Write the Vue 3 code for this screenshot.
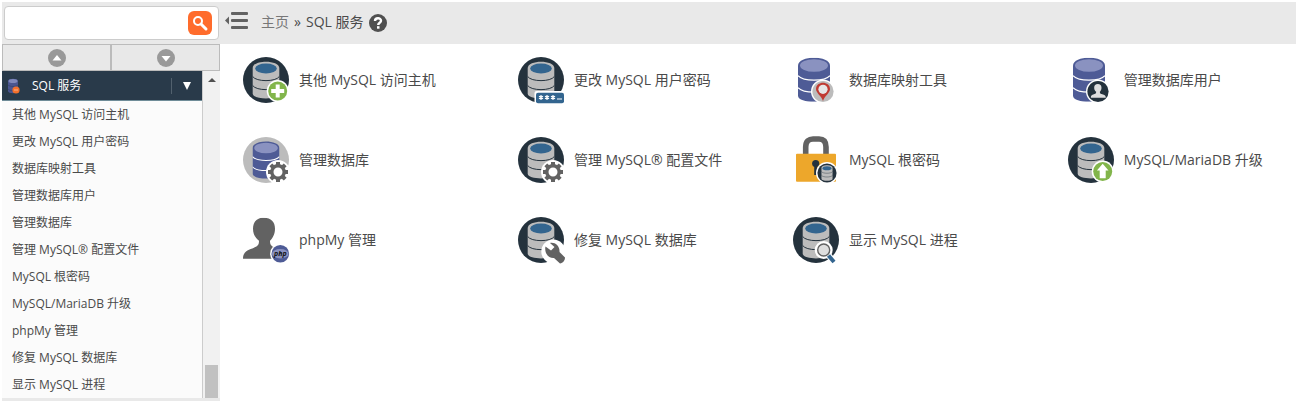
<script setup>
import { ref, computed } from 'vue'

const search = ref('')
const open = ref(true)

const items = [
    {icon: 'host', text: '其他 MySQL 访问主机'},
    {icon: 'password', text: '更改 MySQL 用户密码'},
    {icon: 'map', text: '数据库映射工具'},
    {icon: 'dbuser', text: '管理数据库用户'},
    {icon: 'manage', text: '管理数据库'},
    {icon: 'config', text: '管理 MySQL® 配置文件'},
    {icon: 'root', text: 'MySQL 根密码'},
    {icon: 'upgrade', text: 'MySQL/MariaDB 升级'},
    {icon: 'phpmy', text: 'phpMy 管理'},
    {icon: 'repair', text: '修复 MySQL 数据库'},
    {icon: 'process', text: '显示 MySQL 进程'},
]

// icons that show the grey cylinder on a dark disc
const darkIcons = ['host', 'password', 'config', 'upgrade', 'repair', 'process']

const menu = computed(() => items.filter(({text}) => text.toLowerCase().includes(search.value.toLowerCase())))
</script>

<template>
    <div class="page">
        <svg class="defs" aria-hidden="true">
            <symbol id="db-dark" viewBox="0 0 48 48">
                <circle cx="24" cy="24" r="23" fill="#24323d"/>
                <path d="M10.7 12C10.7 3.5 37.3 3.5 37.3 12V37.5C37.3 44 10.7 44 10.7 37.5Z" fill="#bcbcbc"/>
                <ellipse cx="24" cy="12.5" rx="10.8" ry="4.9" fill="#33658f"/>
                <path d="M10.7 20.5C14 26 34 26 37.3 20.5M10.7 29.5C14 35 34 35 37.3 29.5" fill="none" stroke="#24323d"/>
            </symbol>
            <symbol id="db-blue" viewBox="0 0 32 44">
                <path d="M0 8C0 -2.6 32 -2.6 32 8V38C32 46 0 46 0 38Z" fill="#4e5b96"/>
                <ellipse cx="16" cy="7.8" rx="14" ry="6.3" fill="#8a92c0"/>
                <path d="M0 18C5 24 27 24 32 18M0 30C5 36 27 36 32 30" fill="none" stroke="#fff" stroke-width="1.2"/>
            </symbol>
            <symbol id="gear" viewBox="-12 -12 24 24">
                <circle r="12" fill="#fff"/>
                <circle r="6.2" fill="none" stroke="#626262" stroke-width="3.4"/>
                <path d="M0 -7V-10M0 7V10M-7 0H-10M7 0H10M-5 -5L-7.2 -7.2M5 5L7.2 7.2M-5 5L-7.2 7.2M5 -5L7.2 -7.2" stroke="#626262" stroke-width="4"/>
            </symbol>
            <symbol id="person" viewBox="0 0 46 42">
                <path d="M21 0C28 0 32 4 32 11C32 17 29 21 27 23C27 27 28 28 32 30C38 32 45 33 45 41H0C0 33 6 32 11 30C15 28 16 27 16 23C13 21 10 17 10 11C10 4 14 0 21 0Z" fill="currentColor"/>
            </symbol>
        </svg>

        <aside class="sidebar">
            <form class="search" role="search" @submit.prevent>
                <div class="field">
                    <input v-model="search" type="text" aria-label="搜索">
                    <button type="submit" aria-label="搜索">
                        <svg width="24" height="24" viewBox="0 0 24 24" fill="none" stroke="#fff">
                            <circle cx="10" cy="10" r="4" stroke-width="2"/>
                            <path d="M13 13L18 18" stroke-width="3" stroke-linecap="round"/>
                        </svg>
                    </button>
                </div>
            </form>
            <div class="jump">
                <button type="button" aria-label="上移">
                    <svg width="18" height="18" viewBox="0 0 18 18"><circle cx="9" cy="9" r="9" fill="#999"/><path d="M9 6L13.5 11.5H4.5Z" fill="#fff"/></svg>
                </button>
                <button type="button" aria-label="下移">
                    <svg width="18" height="18" viewBox="0 0 18 18"><circle cx="9" cy="9" r="9" fill="#999"/><path d="M9 12.5L13.5 7H4.5Z" fill="#fff"/></svg>
                </button>
            </div>
            <div class="scroller">
                <nav class="menu">
                    <button type="button" class="group" :aria-expanded="open" @click="open = !open">
                        <svg width="13" height="16" viewBox="0 0 13 16">
                            <path d="M1 3C1 0 11 0 11 3V13C11 16 1 16 1 13Z" fill="#4a5590"/>
                            <ellipse cx="6" cy="3" rx="4.5" ry="2" fill="#7f88ba"/>
                            <path d="M1 7C3 9 9 9 11 7M1 11C3 13 6 13 7 12" fill="none" stroke="#38456e" stroke-width="0.8"/>
                            <circle cx="9" cy="12" r="3.6" fill="#f4702c"/>
                            <path d="M7 12H11" stroke="#fbb48c"/>
                        </svg>
                        <span class="name">SQL 服务</span>
                        <span class="arrow"><svg width="8" height="8" viewBox="0 0 8 8"><path d="M0 0H8L4 8Z" fill="#fff"/></svg></span>
                    </button>
                    <ul v-show="open">
                        <li v-for="{icon, text} in menu" :key="icon"><a href="#" v-text="text"/></li>
                    </ul>
                </nav>
                <div class="track" aria-hidden="true">
                    <svg width="8" height="4" viewBox="0 0 8 4"><path d="M4 0L8 4H0Z" fill="#505050"/></svg>
                    <div class="thumb"/>
                </div>
            </div>
        </aside>

        <div class="content">
            <header class="bar">
                <button type="button" aria-label="折叠菜单">
                    <svg width="24" height="18" viewBox="0 0 24 18" fill="#626262">
                        <path d="M0 8.5L4 4.5V12.5Z"/>
                        <rect x="6" y="0" width="17" height="3" rx="1"/>
                        <rect x="6" y="7" width="17" height="3" rx="1"/>
                        <rect x="6" y="14" width="17" height="3" rx="1"/>
                    </svg>
                </button>
                <nav class="crumbs"><a href="#">主页</a><span>»</span><span>SQL 服务</span></nav>
                <a href="#" class="help" aria-label="帮助">
                    <svg width="18" height="18" viewBox="0 0 18 18">
                        <circle cx="9" cy="9" r="9" fill="#505050"/>
                        <path d="M6 7C6 3.3 12 3.3 12 6.8C12 8.8 9.2 8.7 9.2 11" fill="none" stroke="#fff" stroke-width="2.4"/>
                        <rect x="8" y="12.2" width="2.5" height="2.5" fill="#fff"/>
                    </svg>
                </a>
            </header>

            <main class="grid">
                <a v-for="{icon, text} in items" :key="icon" href="#" class="item">
                    <svg class="icon" width="48" height="48" viewBox="0 0 48 48" aria-hidden="true">
                        <use v-if="darkIcons.includes(icon)" href="#db-dark" width="48" height="48"/>

                        <template v-if="icon === 'host'">
                            <circle cx="35.7" cy="35" r="11" fill="#fff"/>
                            <circle cx="35.7" cy="35" r="9.5" fill="#82b54b"/>
                            <path d="M35.7 28.5V41.5M29.2 35H42.2" stroke="#fff" stroke-width="4"/>
                        </template>
                        <template v-else-if="icon === 'password'">
                            <rect x="17.5" y="35" width="31" height="13" rx="2" fill="#fff"/>
                            <rect x="19" y="36.7" width="28" height="10.5" rx="2" fill="#33658f"/>
                            <path d="M24 39V44M22 40.2L26 42.8M26 40.2L22 42.8M30 39V44M28 40.2L32 42.8M32 40.2L28 42.8M36 39V44M34 40.2L38 42.8M38 40.2L34 42.8M40 43H45" stroke="#fff" stroke-width="1.2"/>
                        </template>
                        <template v-else-if="icon === 'map'">
                            <use href="#db-blue" x="6" y="1.7" width="32" height="44"/>
                            <circle cx="31" cy="35.5" r="12" fill="#fff"/>
                            <circle cx="31" cy="35.5" r="10.6" fill="#bcbcbc"/>
                            <path d="M31 45C29.5 40 24 37 24 33C24 24.5 38 24.5 38 33C38 37 32.5 40 31 45Z" fill="#c03a32"/>
                            <circle cx="31" cy="33.3" r="4.6" fill="#e6e6e6"/>
                        </template>
                        <template v-else-if="icon === 'dbuser'">
                            <use href="#db-blue" x="6" y="1.7" width="32" height="44"/>
                            <circle cx="31" cy="35.5" r="12" fill="#fff"/>
                            <circle cx="31" cy="35.5" r="10.6" fill="#24323d"/>
                            <use href="#person" x="23.5" y="28" width="16" height="14" color="#dedede"/>
                        </template>
                        <template v-else-if="icon === 'manage'">
                            <circle cx="24" cy="24" r="23" fill="#bcbcbc"/>
                            <use href="#db-blue" x="10.5" y="5" width="27" height="38"/>
                            <use href="#gear" x="24" y="24" width="24" height="24"/>
                        </template>
                        <use v-else-if="icon === 'config'" href="#gear" x="24" y="24" width="24" height="24"/>
                        <template v-else-if="icon === 'root'">
                            <path d="M13.7 19V11C13.7 5 17 3 21 3H27C31 3 34 5 34 11V19" fill="none" stroke="#626262" stroke-width="5.6"/>
                            <rect x="4" y="17.7" width="40" height="28" rx="1" fill="#eda72b"/>
                            <circle cx="23.7" cy="27.5" r="3.6" fill="#24323d"/>
                            <path d="M22.2 29H25.2V39H22.2Z" fill="#24323d"/>
                            <circle cx="35" cy="37" r="11" fill="#fff"/>
                            <use href="#db-dark" x="25" y="27" width="20" height="20"/>
                        </template>
                        <template v-else-if="icon === 'upgrade'">
                            <circle cx="35.7" cy="35.5" r="11" fill="#fff"/>
                            <circle cx="35.7" cy="35.5" r="9.5" fill="#82b54b"/>
                            <path d="M35.7 27.7L41.5 34.5H38.7V42.3H32.7V34.5H29.9Z" fill="#fff"/>
                        </template>
                        <template v-else-if="icon === 'phpmy'">
                            <use href="#person" x="1" y="1.7" width="46" height="42" color="#626262"/>
                            <circle cx="38.3" cy="37.7" r="10.2" fill="#fff"/>
                            <circle cx="38.3" cy="37.7" r="8.8" fill="#4e5b96"/>
                            <ellipse cx="38.3" cy="37.7" rx="8.3" ry="4.7" fill="#8a92c0"/>
                            <text x="38.3" y="39.7" class="php">php</text>
                        </template>
                        <template v-else-if="icon === 'repair'">
                            <circle cx="36.3" cy="35.5" r="12" fill="#fff"/>
                            <path d="M28.5 30.5L34 34.5L37.5 31L33 27C38 26 43 30 42.5 36L48 41.5C48 44.5 46 47 43 47.5L37 42C31.5 42.500 27 37 28.5 30.5Z" fill="#626262"/>
                        </template>
                        <template v-else-if="icon === 'process'">
                            <circle cx="31.7" cy="34" r="9" fill="#fff"/>
                            <path d="M35.5 38L43 47" stroke="#fff" stroke-width="6"/>
                            <path d="M36.5 39.5L42 46" stroke="#33658f" stroke-width="4"/>
                            <circle cx="31.7" cy="34" r="6" fill="#dedede" stroke="#626262" stroke-width="1.4"/>
                        </template>
                    </svg>
                    <span v-text="text"/>
                </a>
            </main>
        </div>
    </div>
</template>

<style>
body
{
    background: #fff;
}
</style>

<style scoped>
.page
{
    display: flex;
    padding: 2px;
    color: #4a4a4a;
    font: 14px/20px "Open Sans", "Noto Sans CJK SC", sans-serif;
}

.page *
{
    box-sizing: border-box;
}

.defs
{
    position: absolute;
    width: 0;
    height: 0;
}

svg
{
    display: block;
    flex: none;
}

a
{
    color: inherit;
    text-decoration: none;
}

button
{
    margin: 0;
    padding: 0;
    border: 0;
    background: none;
    font: inherit;
    cursor: pointer;
}

.sidebar
{
    flex: none;
    width: 218px;
    font-size: 12px;
}

.search
{
    height: 42px;
    padding: 4px 1px 4px 2px;
    background: #e9e9e9;
}

.field
{
    display: flex;
    align-items: center;
    height: 34px;
    padding: 0 6px;
    border: 1px solid #ccc;
    border-radius: 4px;
    background: #fff;
}

.field input
{
    flex: 1;
    min-width: 0;
    border: 0;
    outline: 0;
    background: none;
    font: inherit;
}

.field button
{
    border-radius: 6px;
    background: #ff6c2c;
}

.jump
{
    display: flex;
    height: 27px;
    border: 1px solid #bbb;
    background: #e8e8e8;
}

.jump button
{
    flex: 1;
    display: flex;
    align-items: center;
    justify-content: center;
}

.jump button + button
{
    border-left: 2px solid #bbb;
}

.scroller
{
    display: flex;
    border-bottom: 3px solid #e9e9e9;
}

.menu
{
    flex: 1;
    border-right: 1px solid #ccc;
    background: #fbfbfb;
}

.group
{
    display: flex;
    align-items: center;
    width: 100%;
    height: 30px;
    padding-left: 5px;
    border-bottom: 1px solid #6f8c98;
    background: #293a4a;
    color: #fff;
    text-align: left;
}

.name
{
    flex: 1;
    padding-left: 12px;
}

.arrow
{
    display: flex;
    align-items: center;
    height: 16px;
    padding: 0 11px;
    border-left: 1px solid #52616e;
}

.menu ul
{
    margin: 0;
    padding: 0;
    list-style: none;
}

.menu li a
{
    display: block;
    padding-left: 10px;
    line-height: 27px;
}

.track
{
    display: flex;
    flex-direction: column;
    align-items: center;
    justify-content: space-between;
    width: 17px;
    padding-top: 7px;
    background: #f1f1f1;
}

.thumb
{
    width: 13px;
    height: 33px;
    background: #c1c1c1;
}

.content
{
    flex: 1;
    min-width: 0;
}

.bar
{
    display: flex;
    align-items: center;
    height: 42px;
    padding: 0 5px;
    background: #e9e9e9;
}

.bar button svg
{
    margin-bottom: 4px;
}

.crumbs
{
    display: flex;
    gap: 5px;
    padding: 0 6px 2px 12px;
}

.crumbs a
{
    color: #777;
}

.grid
{
    display: grid;
    grid-template-columns: repeat(3, 6fr) 5fr;
    row-gap: 32px;
    padding: 12px 0 0 22px;
}

.item
{
    display: flex;
    align-items: center;
    gap: 9px;
}

.php
{
    fill: #111;
    font: italic bold 7px "Open Sans", sans-serif;
    text-anchor: middle;
}
</style>
